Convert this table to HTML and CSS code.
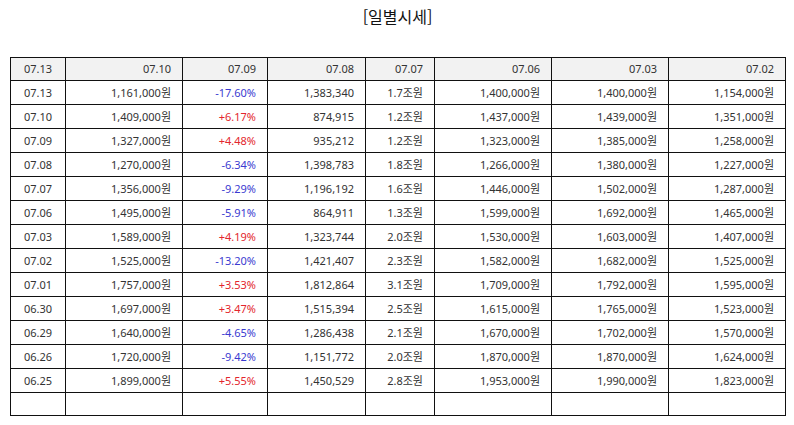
FILE: index.html
```html
<!DOCTYPE html>
<html lang="ko">
<head>
<meta charset="utf-8">
<link rel="stylesheet" href="styles.css">
</head>
<body>
<h1 class="title">[일별시세]</h1>
<table class="grid">
<colgroup>
<col style="width:55px"><col style="width:117px"><col style="width:85px"><col style="width:98px"><col style="width:69px"><col style="width:117px"><col style="width:117px"><col style="width:117px">
</colgroup>
<thead>
<tr class="head"><th class="c">07.13</th><th>07.10</th><th>07.09</th><th>07.08</th><th>07.07</th><th>07.06</th><th>07.03</th><th>07.02</th></tr>
</thead>
<tbody>
<tr><td class="c">07.13</td><td>1,161,000원</td><td class="dn">-17.60%</td><td>1,383,340</td><td>1.7조원</td><td>1,400,000원</td><td>1,400,000원</td><td>1,154,000원</td></tr>
<tr><td class="c">07.10</td><td>1,409,000원</td><td class="up">+6.17%</td><td>874,915</td><td>1.2조원</td><td>1,437,000원</td><td>1,439,000원</td><td>1,351,000원</td></tr>
<tr><td class="c">07.09</td><td>1,327,000원</td><td class="up">+4.48%</td><td>935,212</td><td>1.2조원</td><td>1,323,000원</td><td>1,385,000원</td><td>1,258,000원</td></tr>
<tr><td class="c">07.08</td><td>1,270,000원</td><td class="dn">-6.34%</td><td>1,398,783</td><td>1.8조원</td><td>1,266,000원</td><td>1,380,000원</td><td>1,227,000원</td></tr>
<tr><td class="c">07.07</td><td>1,356,000원</td><td class="dn">-9.29%</td><td>1,196,192</td><td>1.6조원</td><td>1,446,000원</td><td>1,502,000원</td><td>1,287,000원</td></tr>
<tr><td class="c">07.06</td><td>1,495,000원</td><td class="dn">-5.91%</td><td>864,911</td><td>1.3조원</td><td>1,599,000원</td><td>1,692,000원</td><td>1,465,000원</td></tr>
<tr><td class="c">07.03</td><td>1,589,000원</td><td class="up">+4.19%</td><td>1,323,744</td><td>2.0조원</td><td>1,530,000원</td><td>1,603,000원</td><td>1,407,000원</td></tr>
<tr><td class="c">07.02</td><td>1,525,000원</td><td class="dn">-13.20%</td><td>1,421,407</td><td>2.3조원</td><td>1,582,000원</td><td>1,682,000원</td><td>1,525,000원</td></tr>
<tr><td class="c">07.01</td><td>1,757,000원</td><td class="up">+3.53%</td><td>1,812,864</td><td>3.1조원</td><td>1,709,000원</td><td>1,792,000원</td><td>1,595,000원</td></tr>
<tr><td class="c">06.30</td><td>1,697,000원</td><td class="up">+3.47%</td><td>1,515,394</td><td>2.5조원</td><td>1,615,000원</td><td>1,765,000원</td><td>1,523,000원</td></tr>
<tr><td class="c">06.29</td><td>1,640,000원</td><td class="dn">-4.65%</td><td>1,286,438</td><td>2.1조원</td><td>1,670,000원</td><td>1,702,000원</td><td>1,570,000원</td></tr>
<tr><td class="c">06.26</td><td>1,720,000원</td><td class="dn">-9.42%</td><td>1,151,772</td><td>2.0조원</td><td>1,870,000원</td><td>1,870,000원</td><td>1,624,000원</td></tr>
<tr><td class="c">06.25</td><td>1,899,000원</td><td class="up">+5.55%</td><td>1,450,529</td><td>2.8조원</td><td>1,953,000원</td><td>1,990,000원</td><td>1,823,000원</td></tr>
<tr class="empty"><td></td><td></td><td></td><td></td><td></td><td></td><td></td><td></td></tr>
</tbody>
</table>
</body>
</html>
```
FILE: styles.css
```css
html, body {
  margin: 0;
  padding: 0;
  background: #ffffff;
}
body {
  padding: 0 9px 0 10px;
  font-family: "Noto Sans", "Noto Sans CJK KR", sans-serif;
  color: #333333;
}
.title {
  margin: 0;
  height: 57px;
  padding-top: 5px;
  box-sizing: border-box;
  text-align: center;
  font-family: "Noto Sans CJK KR", sans-serif;
  font-size: 16px;
  font-weight: 400;
  line-height: 22px;
  color: #111111;
}
.grid {
  width: 775px;
  table-layout: fixed;
  border-collapse: collapse;
  font-size: 11px;
}
.grid th, .grid td {
  border: 1px solid #111111;
  padding: 0 11px 0 4px;
  height: 23px;
  text-align: right;
  font-weight: 400;
  white-space: nowrap;
  line-height: 14px;
  color: #333333;
}
.grid .head th {
  background: #f2f2f2;
  height: 22px;
}
.grid .c {
  text-align: center;
  padding: 0;
}
.grid td.up { color: #e3262d; }
.grid td.dn { color: #3a3ad0; }
.grid .empty td { height: 22px; }
```
